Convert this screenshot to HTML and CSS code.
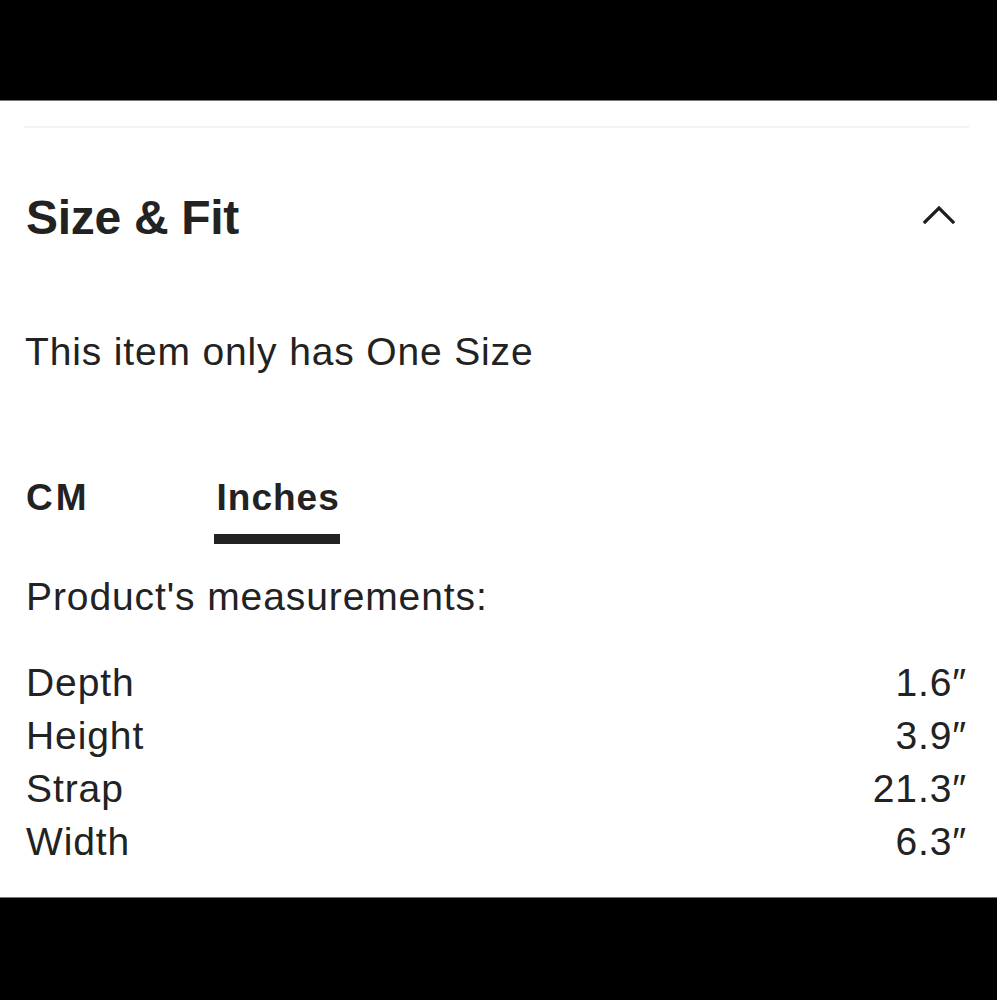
FILE: index.html
```html
<!DOCTYPE html>
<html lang="en">
<head>
<meta charset="utf-8">
<title>Size &amp; Fit</title>
<link rel="stylesheet" href="styles.css">
</head>
<body>
<div class="bar bar-top"></div>
<main class="panel">
  <hr class="divider">
  <div class="header">
    <h2 class="title">Size &amp; Fit</h2>
    <svg class="chevron" width="34" height="22" viewBox="0 0 34 22" aria-hidden="true">
      <polyline points="3,18 17,4 31,18" fill="none" stroke="#1e1e1e" stroke-width="3.2" stroke-linecap="square" stroke-linejoin="miter"/>
    </svg>
  </div>
  <p class="note">This item only has One Size</p>
  <div class="tabs">
    <span class="tab tab-cm">CM</span>
    <span class="tab tab-active">Inches</span>
  </div>
  <p class="label">Product's measurements:</p>
  <dl class="measures">
    <div class="row"><dt>Depth</dt><dd>1.6″</dd></div>
    <div class="row"><dt>Height</dt><dd>3.9″</dd></div>
    <div class="row"><dt>Strap</dt><dd>21.3″</dd></div>
    <div class="row"><dt>Width</dt><dd>6.3″</dd></div>
  </dl>
</main>
<div class="bar bar-bottom"></div>
</body>
</html>
```
FILE: styles.css
```css
html, body {
  margin: 0;
  padding: 0;
  background: #fff;
}
body {
  width: 1000px;
  height: 1000px;
  overflow: hidden;
  font-family: "Liberation Sans", Arial, sans-serif;
  color: #222;
}
.bar {
  background: #000;
  width: 997px;
}
.bar-top {
  height: 100px;
  border-bottom: 1px solid #777;
}
.bar-bottom {
  height: 102px;
  border-top: 1px solid #777;
}
.panel {
  height: 796px;
  padding: 0 33px 0 24px;
  box-sizing: border-box;
  overflow: hidden;
}
.divider {
  margin: 25px -2px 0 0;
  border: 0;
  height: 2px;
  background: #f3f3f3;
}
.header {
  display: flex;
  justify-content: space-between;
  align-items: center;
  margin-top: 62px;
}
.title {
  margin: 0 0 0 2px;
  font-size: 48px;
  font-weight: 700;
  line-height: 56px;
  letter-spacing: -0.3px;
}
.chevron {
  margin-right: 11px;
  margin-top: -6px;
}
.note {
  margin: 82px 0 0 1px;
  font-size: 39px;
  letter-spacing: 0.85px;
  line-height: 48px;
}
.tabs {
  display: flex;
  gap: 124px;
  margin-top: 99px;
  margin-left: 2px;
}
.tab {
  font-size: 37px;
  font-weight: 700;
  letter-spacing: 1px;
  line-height: 46px;
  padding-bottom: 13px;
}
.tab-cm {
  letter-spacing: 3px;
}
.tab-active {
  padding-left: 3px;
  border-bottom: 10px solid #222;
}
.label {
  margin: 29px 0 0 2px;
  font-size: 39px;
  letter-spacing: 0.9px;
  line-height: 48px;
}
.measures {
  margin: 35px 0 0 2px;
}
.row {
  display: flex;
  justify-content: space-between;
  font-size: 39px;
  letter-spacing: 0.9px;
  line-height: 53px;
}
.row dt, .row dd {
  margin: 0;
}
```
